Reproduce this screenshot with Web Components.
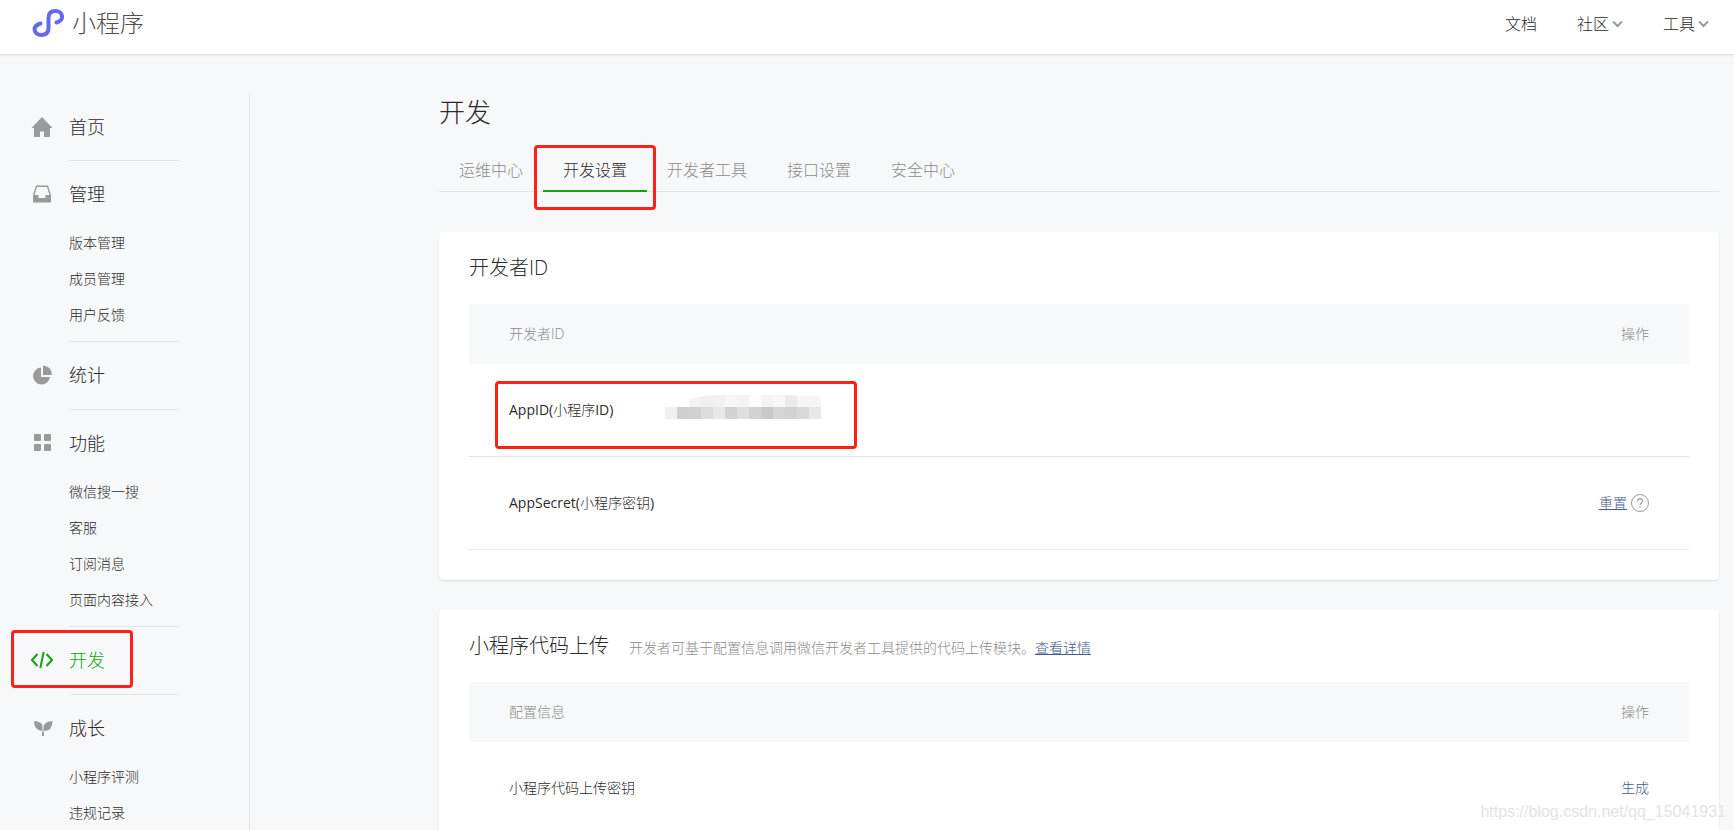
<!DOCTYPE html>
<html lang="zh-CN">
<head>
<meta charset="utf-8">
<title>小程序 - 开发设置</title>
<style>
html, body { margin: 0; height: 100%; }
body {
  --ink: #2b2b2b; --muted: #8c8c8c; --line: #e4e5e7; --green: #10a610; --link: #465b8c; --mark: #ff2115; --wash: #f7f8fa;
  background: var(--wash); color: var(--ink); overflow: hidden;
  font: 14px/20px "Open Sans", "Noto Sans CJK SC Light", "Noto Sans CJK SC", sans-serif;
  font-weight: 300;
}
</style>
</head>
<body>
<mp-app></mp-app>
<script>
const define = (name, html, setup) => {
  const template = document.createElement('template');
  template.innerHTML = html;
  customElements.define(name, class extends HTMLElement {
    constructor() {
      super();
      this.attachShadow({ mode: 'open' }).append(template.content.cloneNode(true));
    }
    connectedCallback() { if (setup) setup(this, this.shadowRoot); }
  });
};

const icons = {
  home: '<path d="M11 1 .5 12H3v8.500q0 .5.5.5H9v-5.500h4V21h5.500q.5 0 .5-.5V12h2.500z"/>',
  inbox: '<path fill-rule="evenodd" d="M5 2.500h12L20 12v7q0 .5-.5.5h-17q-.5 0-.5-.5V12zM6 4 3.500 12H7.500V15h7V12h4L16 4z"/>',
  pie: '<path d="M10 3.500a8.500 8.500 0 1 0 9 9.500H10z"/><path d="M12 1.500V11h9a9 9 0 0 0-9-9.500z"/>',
  grid: '<rect x="3" y="2" width="7" height="7" rx="1"/><rect x="13" y="2" width="7" height="7" rx="1"/><rect x="3" y="12" width="7" height="7" rx="1"/><rect x="13" y="12" width="7" height="7" rx="1"/>',
  code: '<path fill="none" stroke="currentColor" stroke-width="2" d="M6.500 5 1 11l5.500 6M15.500 5l5.500 6-5.500 6M12.700 3 9.300 19"/>',
  leaf: '<path d="M3 4q8 0 9 6 2-6 9.500-6 0 10-8.500 10v5h-2v-5Q3 13 3 4z"/><path d="M12 9v6" stroke="var(--wash)" stroke-width="1"/>'
};

define('mp-icon', `
<style>:host { display: block; width: 22px; height: 22px; color: #9a9a9a } svg { display: block; fill: currentColor }</style>
<svg width="22" height="22" viewBox="0 0 22 22" aria-hidden="true"></svg>`,
(el, root) => { root.querySelector('svg').innerHTML = icons[el.getAttribute('name')]; });

define('mp-mark', `
<style>
:host { position: absolute; box-sizing: border-box; border: 3px solid var(--mark); border-radius: 4px; pointer-events: none; z-index: 2 }
</style>`);

define('mp-header', `
<style>
:host { display: flex; flex: none; align-items: center; justify-content: space-between; box-sizing: border-box; height: 55px; padding: 0 25px 8px 32px; background: #fff; border-bottom: 1px solid #e0e1e3; box-shadow: 0 1px 2px rgba(0,0,0,.05) }
.logo { display: flex; align-items: center; gap: 8px; font-size: 24px; line-height: 32px; color: #505050; text-decoration: none }
nav { display: flex; gap: 40px; font-size: 16px; line-height: 24px; padding-top: 2px }
nav a { display: flex; align-items: center; gap: 3px; color: inherit; text-decoration: none }
</style>
<a class="logo" href="#"><svg width="32" height="32" viewBox="0 0 32 32" fill="none" stroke="#6467f0" stroke-width="4" stroke-linecap="round" aria-hidden="true"><path d="M8.500 16.500C-1 19.500 2.500 28 9 28q7.500 0 7.500-7V11q0-7 7-7C31 4 33 13 24.500 15.500"/></svg><span>小程序</span></a>
<nav><a href="#">文档</a><a href="#">社区<mp-chevron></mp-chevron></a><a href="#">工具<mp-chevron></mp-chevron></a></nav>`);

define('mp-chevron', `
<style>:host { display: block } svg { display: block }</style>
<svg width="11" height="8" viewBox="0 0 11 8" fill="none" stroke="#9a9a9a" stroke-width="2" aria-hidden="true"><path d="M1 1.500 5.500 6 10 1.500"/></svg>`);

define('mp-section', `
<style>
:host { display: grid; grid-template-columns: 32px 110px; column-gap: 10px; padding-left: 27px }
.icon { padding: 23px 0 0 4px }
.body { border-top: 1px solid var(--line); padding: 20px 0 8px }
:host([first]) .body { border-top: 0; padding: 21px 0 7px }
a { display: block; color: inherit; text-decoration: none; white-space: nowrap }
.title { font-size: 18px; line-height: 26px; padding-bottom: 13px }
:host([active]) .title, :host([active]) mp-icon { color: var(--green) }
ul { list-style: none; margin: 5px 0 0; padding: 0 }
li { line-height: 36px }
</style>
<div class="icon"></div>
<div class="body"><a class="title" href="#"><slot></slot></a></div>`,
(el, root) => {
  root.querySelector('.icon').innerHTML = `<mp-icon name="${el.getAttribute('icon')}"></mp-icon>`;
  const items = el.getAttribute('items');
  if (items) root.querySelector('.body').insertAdjacentHTML('beforeend', '<ul>' + items.split(',').map(t => `<li><a href="#">${t}</a></li>`).join('') + '</ul>');
});

define('mp-sidebar', `
<style>
:host { display: block; box-sizing: border-box; width: 250px; border-right: 1px solid var(--line) }
.current { position: relative }
mp-mark { left: 11px; top: 4px; width: 122px; height: 58px }
</style>
<mp-section first icon="home">首页</mp-section>
<mp-section icon="inbox" items="版本管理,成员管理,用户反馈">管理</mp-section>
<mp-section icon="pie">统计</mp-section>
<mp-section icon="grid" items="微信搜一搜,客服,订阅消息,页面内容接入">功能</mp-section>
<div class="current"><mp-section active icon="code">开发</mp-section><mp-mark></mp-mark></div>
<mp-section icon="leaf" items="小程序评测,违规记录">成长</mp-section>`);

define('mp-tabs', `
<style>
:host { display: block; border-bottom: 1px solid var(--line) }
nav { display: flex; height: 43px; margin-bottom: -1px }
a { position: relative; box-sizing: border-box; padding: 9px 20px 0; font-size: 16px; line-height: 24px; color: var(--muted); text-decoration: none; border-bottom: 2px solid transparent }
a[aria-current] { color: var(--ink); border-color: var(--green) }
mp-mark { left: -9px; top: -4px; width: 122px; height: 65px }
</style>
<nav><a href="#">运维中心</a><a href="#" aria-current="page">开发设置<mp-mark></mp-mark></a><a href="#">开发者工具</a><a href="#">接口设置</a><a href="#">安全中心</a></nav>`);

define('mp-card', `
<style>
:host { display: block; background: #fff; border-radius: 4px; box-shadow: 0 1px 2px rgba(0,0,0,.13); padding: 22px 30px 30px }
header { display: flex; align-items: baseline; gap: 20px; margin-bottom: 22px; color: var(--muted) }
h2 { margin: 0; font-size: 20px; line-height: 28px; font-weight: inherit; color: var(--ink) }
</style>
<header><h2><slot name="title"></slot></h2><slot name="note"></slot></header><slot></slot>`);

define('mp-mosaic', `
<style>:host { display: block } svg { display: block }</style>
<svg width="156" height="24" viewBox="0 0 156 24" aria-hidden="true"><defs><clipPath id="c"><path d="M0 12H24V4Q36 1 48 0H126L132 1H152Q156 1 156 4V24H0z"/></clipPath></defs><g clip-path="url(#c)"></g></svg>`,
(el, root) => {
  const rows = [['fff','fff','f3f3f3','efefef','f1f1f1','f7f7f7','f3f3f3','fcfcfc','f4f4f4','f7f7f7','ebebeb','f5f5f5','f5f5f5'],
    ['f0f0f0','cfcfcf','d1d1d1','dcdcdc','e8e8e8','d3d3d3','dfdfdf','d3d3d3','c9c9c9','d5d5d5','d2d2d2','d9d9d9','e8e8e8']];
  root.querySelector('g').innerHTML = rows.map((r, y) => r.map((c, x) => `<rect x="${x * 12}" y="${y * 12}" width="12" height="12" fill="#${c}"/>`).join('')).join('');
});

const tableStyle = `
:host { display: block }
table { width: 100%; border-collapse: collapse }
th, td { padding: 0 40px; text-align: left; font-weight: inherit }
th { height: 60px; background: var(--wash); color: var(--muted) }
td { height: 92px; border-bottom: 1px solid var(--line) }
th:last-child, td:last-child { text-align: right }
.latin { font-weight: 400 }
a { color: var(--link) }`;

define('mp-id-table', `
<style>${tableStyle}
.pair { position: relative; display: flex; align-items: center }
.key { width: 156px }
mp-mosaic { margin-top: -6px }
mp-mark { left: -14px; top: -19px; width: 362px; height: 68px }
.ops { display: flex; justify-content: flex-end; align-items: center; gap: 4px }
button { display: block; padding: 0; border: 0; background: none; width: 18px; height: 18px }
svg { display: block }
</style>
<table>
<thead><tr><th>开发者ID</th><th>操作</th></tr></thead>
<tbody>
<tr><td><div class="pair"><span class="key"><span class="latin">AppID(</span>小程序<span class="latin">ID)</span></span><mp-mosaic></mp-mosaic><mp-mark></mp-mark></div></td><td></td></tr>
<tr><td><span class="latin">AppSecret(</span>小程序密钥<span class="latin">)</span></td><td><div class="ops"><a href="#">重置</a><button type="button" aria-label="帮助"><svg width="18" height="18" viewBox="0 0 18 18" fill="none" stroke="#9a9a9a" aria-hidden="true"><circle cx="9" cy="9" r="8.500"/><path stroke-width="1.200" d="M6.500 7.200C6.500 3.800 11.500 4 11.500 7c0 2-2.500 2-2.500 4M9 12.200v1.500"/></svg></button></div></td></tr>
</tbody>
</table>`);

define('mp-upload-table', `
<style>${tableStyle} a { text-decoration: none }</style>
<table>
<thead><tr><th>配置信息</th><th>操作</th></tr></thead>
<tbody><tr><td>小程序代码上传密钥</td><td><a href="#">生成</a></td></tr></tbody>
</table>`);

define('mp-app', `
<style>
:host { display: flex; flex-direction: column; position: relative; height: 100vh; overflow: hidden }
.page { display: flex; gap: 189px; padding: 38px 15px 0 0; flex: 1 }
mp-sidebar { flex: none }
main { flex: 1; min-width: 0 }
h1 { margin: 0 0 18px; font-size: 26px; line-height: 38px; font-weight: inherit }
mp-tabs { margin-bottom: 40px }
mp-card { margin-bottom: 30px }
a { color: var(--link) }
.watermark { position: absolute; right: 8px; bottom: 8px; font: 16px/20px "Liberation Sans", sans-serif; color: #e3e3e4; text-shadow: 0 0 1px #fff }
</style>
<mp-header></mp-header>
<div class="page">
<mp-sidebar></mp-sidebar>
<main>
<h1>开发</h1>
<mp-tabs></mp-tabs>
<mp-card><span slot="title">开发者ID</span><mp-id-table></mp-id-table></mp-card>
<mp-card><span slot="title">小程序代码上传</span><span slot="note">开发者可基于配置信息调用微信开发者工具提供的代码上传模块。<a href="#">查看详情</a></span><mp-upload-table></mp-upload-table></mp-card>
</main>
</div>
<div class="watermark">https://blog.csdn.net/qq_15041931</div>`);
</script>
</body>
</html>
